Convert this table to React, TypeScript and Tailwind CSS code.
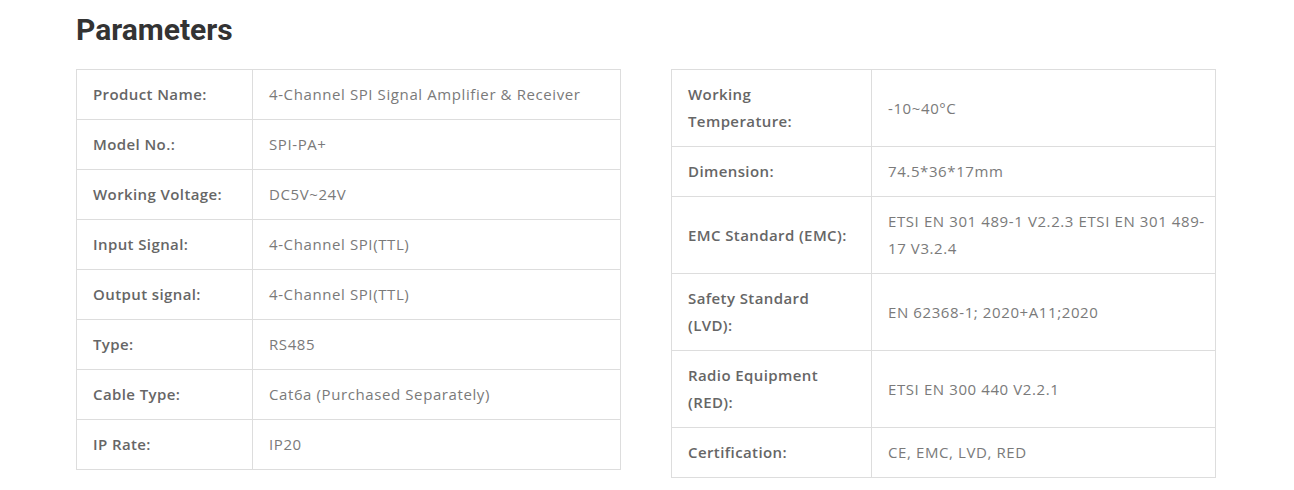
import React from 'react';

type Row = { label: React.ReactNode; value: React.ReactNode };

const leftRows: Row[] = [
  { label: 'Product Name:', value: '4-Channel SPI Signal Amplifier & Receiver' },
  { label: 'Model No.:', value: 'SPI-PA+' },
  { label: 'Working Voltage:', value: 'DC5V~24V' },
  { label: 'Input Signal:', value: '4-Channel SPI(TTL)' },
  { label: 'Output signal:', value: '4-Channel SPI(TTL)' },
  { label: 'Type:', value: 'RS485' },
  { label: 'Cable Type:', value: 'Cat6a (Purchased Separately)' },
  { label: 'IP Rate:', value: 'IP20' },
];

const rightRows: Row[] = [
  { label: <>Working<br />Temperature:</>, value: '-10~40°C' },
  { label: 'Dimension:', value: '74.5*36*17mm' },
  { label: 'EMC Standard (EMC):', value: <>ETSI EN 301 489-1 V2.2.3 ETSI EN 301 489-<br />17 V3.2.4</> },
  { label: <>Safety Standard<br />(LVD):</>, value: 'EN 62368-1; 2020+A11;2020' },
  { label: <>Radio Equipment<br />(RED):</>, value: 'ETSI EN 300 440 V2.2.1' },
  { label: 'Certification:', value: 'CE, EMC, LVD, RED' },
];

const SpecTable: React.FC<{ rows: Row[]; labelWidth: string }> = ({ rows, labelWidth }) => (
  <table className="w-full table-fixed border-collapse border border-[#dddddd] text-[15px] leading-[27px]">
    <tbody>
      {rows.map((row, i) => (
        <tr key={i}>
          <td className={`${labelWidth} border border-[#dddddd] px-4 py-[11px] align-middle font-semibold tracking-[0.4px] text-[#666666] whitespace-nowrap`}>
            {row.label}
          </td>
          <td className="border border-[#dddddd] px-4 py-[11px] align-middle tracking-[0.6px] text-[#7a7a7a] whitespace-nowrap">
            {row.value}
          </td>
        </tr>
      ))}
    </tbody>
  </table>
);

const App: React.FC = () => {
  return (
    <div className="min-h-screen bg-white font-['Open_Sans',sans-serif]">
      <div className="ml-[76px] w-[1140px] pt-[12px]">
        <h2 className="font-['Roboto',sans-serif] text-[30px] font-bold leading-[36px] text-[#333333]">Parameters</h2>
        <div className="mt-[21px] grid grid-cols-2 gap-[50px] items-start">
          <SpecTable rows={leftRows} labelWidth="w-[176px]" />
          <SpecTable rows={rightRows} labelWidth="w-[200px]" />
        </div>
      </div>
    </div>
  );
};

export default App;
